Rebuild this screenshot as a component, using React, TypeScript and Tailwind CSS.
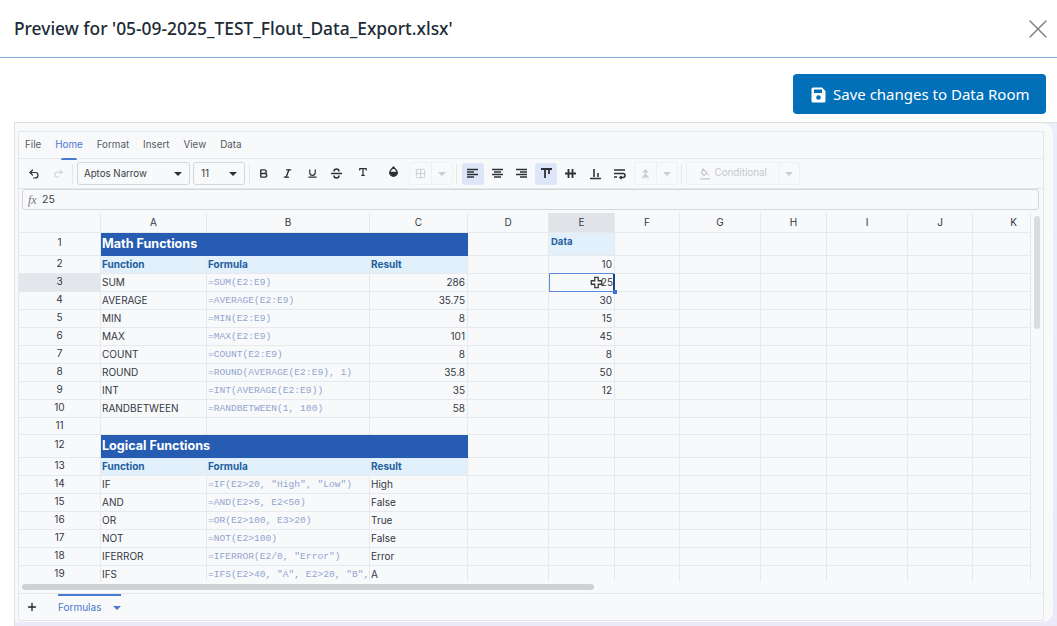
import { X, Undo2, Redo2, Bold, Italic, Underline, Type, Grid2x2, Plus } from "lucide-react";

const colWidths = [82, 106, 163, 98, 81, 66, 65, 81, 66, 81, 65, 58];
const colNames = ["", "A", "B", "C", "D", "E", "F", "G", "H", "I", "J", "K"];

type Kind = "section" | "head" | "fn" | "blank";
type Row = { n: number; h: number; kind: Kind; a?: string; b?: string; c?: string; cRight?: boolean; e?: string };

const rows: Row[] = [
  { n: 1, h: 23, kind: "section", a: "Math Functions", e: "Data" },
  { n: 2, h: 18, kind: "head", a: "Function", b: "Formula", c: "Result", e: "10" },
  { n: 3, h: 18, kind: "fn", a: "SUM", b: "=SUM(E2:E9)", c: "286", cRight: true, e: "25" },
  { n: 4, h: 18, kind: "fn", a: "AVERAGE", b: "=AVERAGE(E2:E9)", c: "35.75", cRight: true, e: "30" },
  { n: 5, h: 18, kind: "fn", a: "MIN", b: "=MIN(E2:E9)", c: "8", cRight: true, e: "15" },
  { n: 6, h: 18, kind: "fn", a: "MAX", b: "=MAX(E2:E9)", c: "101", cRight: true, e: "45" },
  { n: 7, h: 18, kind: "fn", a: "COUNT", b: "=COUNT(E2:E9)", c: "8", cRight: true, e: "8" },
  { n: 8, h: 18, kind: "fn", a: "ROUND", b: "=ROUND(AVERAGE(E2:E9), 1)", c: "35.8", cRight: true, e: "50" },
  { n: 9, h: 18, kind: "fn", a: "INT", b: "=INT(AVERAGE(E2:E9))", c: "35", cRight: true, e: "12" },
  { n: 10, h: 18, kind: "fn", a: "RANDBETWEEN", b: "=RANDBETWEEN(1, 100)", c: "58", cRight: true },
  { n: 11, h: 17, kind: "blank" },
  { n: 12, h: 23, kind: "section", a: "Logical Functions" },
  { n: 13, h: 18, kind: "head", a: "Function", b: "Formula", c: "Result" },
  { n: 14, h: 18, kind: "fn", a: "IF", b: '=IF(E2>20, "High", "Low")', c: "High" },
  { n: 15, h: 18, kind: "fn", a: "AND", b: "=AND(E2>5, E2<50)", c: "False" },
  { n: 16, h: 18, kind: "fn", a: "OR", b: "=OR(E2>100, E3>20)", c: "True" },
  { n: 17, h: 18, kind: "fn", a: "NOT", b: "=NOT(E2>100)", c: "False" },
  { n: 18, h: 18, kind: "fn", a: "IFERROR", b: '=IFERROR(E2/0, "Error")', c: "Error" },
  { n: 19, h: 18, kind: "fn", a: "IFS", b: '=IFS(E2>40, "A", E2>20, "B", "C")', c: "A" },
];

const line = "border-r border-b border-[#e7e9ec]";

function Cell({ w, className = "", children }: { w: number; className?: string; children?: React.ReactNode }) {
  return (
    <div style={{ width: w }} className={`shrink-0 h-full flex items-center overflow-hidden whitespace-nowrap ${line} ${className}`}>
      {children}
    </div>
  );
}

function SheetRow({ row }: { row: Row }) {
  const isActive = row.n === 3;
  return (
    <div style={{ height: row.h }} className="flex text-[10px] text-[#33383f]">
      <Cell w={colWidths[0]} className={`justify-center ${row.kind === "section" ? "pb-[4px]" : "pb-[2px]"} ${isActive ? "bg-[#e3e7ec]" : ""}`}>
        {row.n}
      </Cell>
      {row.kind === "section" ? (
        <div style={{ width: 367 }} className="shrink-0 h-full flex items-center pl-[1px] bg-[#265cb1] text-white text-[12.6px] font-bold">
          {row.a}
        </div>
      ) : row.kind === "head" ? (
        <>
          <Cell w={colWidths[1]} className="pl-[1px] bg-[#e1f0fa] text-[#235f9f] font-bold">{row.a}</Cell>
          <Cell w={colWidths[2]} className="pl-[1px] bg-[#e1f0fa] text-[#235f9f] font-bold">{row.b}</Cell>
          <Cell w={colWidths[3]} className="pl-[1px] bg-[#e1f0fa] text-[#235f9f] font-bold">{row.c}</Cell>
        </>
      ) : (
        <>
          <Cell w={colWidths[1]} className="pl-[1px]">{row.a}</Cell>
          <Cell w={colWidths[2]} className="pl-[1px] pt-[1px] font-['Liberation_Mono',monospace] text-[9.6px] text-[#93a5cf]">{row.b}</Cell>
          <Cell w={colWidths[3]} className={row.cRight ? "justify-end pr-[2px]" : "pl-[1px]"}>{row.c}</Cell>
        </>
      )}
      <Cell w={colWidths[4]} />
      {row.n === 1 ? (
        <Cell w={colWidths[5]} className="pl-[2px] pb-[4px] bg-[#e1f0fa] text-[#235f9f] font-bold text-[9.5px]">{row.e}</Cell>
      ) : isActive ? (
        <Cell w={colWidths[5]} className="relative overflow-visible! justify-end pr-[1px]">
          {row.e}
          <div className="absolute left-0 -top-px right-0 h-px bg-[#5b8ae0]" />
          <div className="absolute left-0 -bottom-px right-0 h-px bg-[#5b8ae0]" />
          <div className="absolute left-0 -top-px -bottom-px w-px bg-[#5b8ae0]" />
          <div className="absolute right-[-1px] top-0 bottom-0 w-[2px] bg-[#1e3f8a]" />
          <div className="absolute right-[-3px] bottom-[-3px] w-[4px] h-[4px] bg-[#3f70d6]" />
          <svg width="13" height="13" viewBox="0 0 15 15" className="absolute right-[11px] top-[2px]">
            <path d="M5.500 1.500h4v4h4v4h-4v4h-4v-4h-4v-4h4z" fill="#ffffff" stroke="#3a3a3a" strokeWidth="1.500" />
          </svg>
        </Cell>
      ) : (
        <Cell w={colWidths[5]} className="justify-end pr-[2px]">{row.e}</Cell>
      )}
      {colWidths.slice(6).map((w, i) => (
        <Cell key={i} w={w} />
      ))}
    </div>
  );
}

function ToolIcon({ children, active, className = "" }: { children: React.ReactNode; active?: boolean; className?: string }) {
  return (
    <div className={`w-[22px] h-[22px] shrink-0 flex items-center justify-center rounded-[3px] text-[#2d3136] ${active ? "bg-[#dde6f8] text-[#2c4a86]" : ""} ${className}`}>
      {children}
    </div>
  );
}

function AlignLines({ d }: { d: string }) {
  return (
    <svg width="13" height="13" viewBox="0 0 13 13" fill="none" stroke="currentColor" strokeWidth="1.300">
      <path d={d} />
    </svg>
  );
}

function Caret({ className = "" }: { className?: string }) {
  return <div className={`w-0 h-0 border-x-[4px] border-x-transparent border-t-[4px] ${className}`} />;
}

function Divider() {
  return <div className="w-px h-[20px] bg-[#e4e6ea] shrink-0" />;
}

function Toolbar() {
  return (
    <div className="h-[30px] shrink-0 flex items-center border-b border-[#e4e6ea] text-[10px] text-[#3a3f45]">
      <ToolIcon className="ml-[4px]"><Undo2 size={12} strokeWidth={2.4} /></ToolIcon>
      <ToolIcon className="ml-[2px] text-[#c4c7cb]!"><Redo2 size={11} /></ToolIcon>
      <div className="ml-[3px]"><Divider /></div>
      <div className="ml-[4px] w-[113px] h-[23px] flex items-center justify-between pt-[1px] px-[6px] border border-[#d4d6da] rounded-[3px] text-[9.7px]">
        Aptos Narrow
        <Caret className="border-t-[#2d3136] mr-[1px]" />
      </div>
      <div className="ml-[3px] w-[52px] h-[23px] flex items-center justify-between px-[7px] border border-[#d4d6da] rounded-[3px]">
        11
        <Caret className="border-t-[#2d3136]" />
      </div>
      <div className="ml-[4px]"><Divider /></div>
      <div className="ml-[2px] flex items-center gap-[2.5px]">
        <ToolIcon><Bold size={11} strokeWidth={3} /></ToolIcon>
        <ToolIcon><Italic size={11} strokeWidth={3} /></ToolIcon>
        <ToolIcon><Underline size={11} strokeWidth={2.6} /></ToolIcon>
        <ToolIcon>
          <svg width="13" height="13" viewBox="0 0 13 13" fill="none" stroke="currentColor" strokeWidth="1.500">
            <path d="M4 4.500a2.500 2.500 0 0 1 5 0M1 6.500h11M4 8.500a2.500 2.500 0 0 0 5 0" />
          </svg>
        </ToolIcon>
        <ToolIcon className="ml-[2px] pb-[3px]"><Type size={10} strokeWidth={3} /></ToolIcon>
        <ToolIcon className="ml-[6px] pb-[3px]">
          <svg width="11" height="12" viewBox="0 0 11 12" fill="none" stroke="currentColor" strokeWidth="1.300">
            <path d="M5.500 1 2.200 4.800a3.600 3.600 0 1 0 6.600 0z" />
            <path d="M1.800 6.500h7.400a3.700 3.700 0 0 1-7.400 0z" fill="currentColor" />
          </svg>
        </ToolIcon>
      </div>
      <div className="ml-[4px] w-[44px] h-[23px] flex border border-[#eff0f2] rounded-[3px]">
        <div className="w-[22px] flex items-center justify-center border-r border-[#eff0f2] text-[#c9ccd0]"><Grid2x2 size={11} /></div>
        <div className="flex-1 flex items-center justify-center"><Caret className="border-t-[#c9ccd0] border-x-[3px] border-t-[3px]" /></div>
      </div>
      <div className="ml-[3px]"><Divider /></div>
      <div className="ml-[5px] flex items-center gap-[2.5px]">
        <ToolIcon active><AlignLines d="M1 2.500h11M1 5h7M1 7.500h11M1 10h7" /></ToolIcon>
        <ToolIcon><AlignLines d="M1 2.500h11M3 5h7M1 7.500h11M3 10h7" /></ToolIcon>
        <ToolIcon><AlignLines d="M1 2.500h11M5 5h7M1 7.500h11M5 10h7" /></ToolIcon>
        <ToolIcon active>
          <svg width="13" height="13" viewBox="0 0 13 13" fill="none" stroke="currentColor" strokeWidth="1.800">
            <path d="M1 2h11M5 2v9M9 2v5" />
          </svg>
        </ToolIcon>
        <ToolIcon>
          <svg width="13" height="13" viewBox="0 0 13 13" fill="none" stroke="currentColor" strokeWidth="1.800">
            <path d="M1 6.500h11M4.500 2v9M8.500 2v9" />
          </svg>
        </ToolIcon>
        <ToolIcon>
          <svg width="13" height="13" viewBox="0 0 13 13" fill="none" stroke="currentColor" strokeWidth="1.600">
            <path d="M1 11.500h11M5 2v8M9 6v4" />
          </svg>
        </ToolIcon>
        <ToolIcon>
          <svg width="13" height="13" viewBox="0 0 13 13" fill="none" stroke="currentColor" strokeWidth="1.500">
            <path d="M1 3h11M1 6.500h9a2 2 0 0 1 0 4H7M8.500 9l-1.500 1.500 1.500 1.500M1 10h3" />
          </svg>
        </ToolIcon>
      </div>
      <div className="ml-[3px] w-[44px] h-[23px] flex border border-[#eff0f2] rounded-[3px]">
        <div className="w-[22px] flex items-center justify-center border-r border-[#eff0f2] text-[#c9ccd0]">
          <svg width="11" height="11" viewBox="0 0 11 11" fill="none" stroke="currentColor" strokeWidth="1.300">
            <path d="M5.500 10V3M3 4.500 5.500 2 8 4.500M2.500 10l3-4 3 4" />
          </svg>
        </div>
        <div className="flex-1 flex items-center justify-center"><Caret className="border-t-[#c9ccd0] border-x-[3px] border-t-[3px]" /></div>
      </div>
      <div className="ml-[3px]"><Divider /></div>
      <div className="ml-[4px] w-[114px] h-[23px] flex border border-[#eff0f2] rounded-[3px] text-[#c4c7cb] text-[9.8px]">
        <div className="w-[93px] flex items-center gap-[4px] pl-[12px] border-r border-[#eff0f2]">
          <svg width="12" height="12" viewBox="0 0 12 12" fill="none" stroke="currentColor" strokeWidth="1.200">
            <path d="M4 1l4 4-3 2.500L2.500 5zM9.500 6v1.500M1 10.800h10" />
          </svg>
          <span>Conditional</span>
        </div>
        <div className="flex-1 flex items-center justify-center"><Caret className="border-t-[#c9ccd0] border-x-[3px] border-t-[3px]" /></div>
      </div>
    </div>
  );
}

export default function App() {
  return (
    <div className="w-[1057px] h-[626px] overflow-hidden bg-white font-['Inter',sans-serif]">
      <header className="h-[58px] flex items-center justify-between pl-[14px] pr-[3px] border-b border-[#80a9d8]">
        <h1 className="font-['Noto_Sans',sans-serif] font-medium text-[17.4px] text-[#212b36]">
          Preview for '05-09-2025_TEST_Flout_Data_Export.xlsx'
        </h1>
        <X size={32} strokeWidth={1} className="text-[#7b7f83]" />
      </header>
      <div className="h-[64px] flex justify-end pt-[16px] pr-[11px]">
        <button className="w-[253px] h-[40px] flex items-center pl-[18px] gap-[7px] rounded-[4px] bg-[#0170b9] text-white font-['Noto_Sans',sans-serif] text-[15px] pt-[1px]">
          <svg width="15" height="16" viewBox="0 0 15 16" className="shrink-0">
            <path d="M2 .500h9l3.500 3.500v10a1.500 1.500 0 0 1-1.500 1.500H2A1.500 1.500 0 0 1 .500 14V2A1.500 1.500 0 0 1 2 .500z" fill="#ffffff" />
            <rect x="3" y="2.500" width="8" height="3.500" fill="#0170b9" />
            <circle cx="7.500" cy="10.500" r="2.300" fill="#0170b9" />
          </svg>
          Save changes to Data Room
        </button>
      </div>
      <div className="ml-[14px] h-[504px] border-t border-l border-[#dedfe1] bg-linear-to-b from-[#e8eefa] to-[#ece9f8]">
        <div className="w-[1038px] h-[499px] pt-[8px] pl-[3px] bg-[#f8f9fb] rounded-r-[10px]">
          <div className="relative w-[1026px] h-[490px] flex flex-col border border-[#e4e6ea] overflow-hidden">
            <nav className="h-[27px] shrink-0 flex items-center gap-[14px] pl-[6px] border-b border-[#e4e6ea] text-[9.8px] text-[#555a61]">
              <span>File</span>
              <span className="relative text-[#4a78cf]">
                Home
                <span className="absolute left-[6px] right-[6px] top-[20px] h-[2px] rounded-t bg-[#4a78cf]" />
              </span>
              <span>Format</span>
              <span>Insert</span>
              <span>View</span>
              <span>Data</span>
            </nav>
            <Toolbar />
            <div className="shrink-0 w-[1017px] ml-[3px] h-[21px] flex items-center border border-[#d4d6da] rounded-[3px] text-[10.5px] text-[#3a3f45]">
              <span className="ml-[5px] w-[12px] font-['Liberation_Serif',serif] italic text-[12px] text-[#77797d]">fx</span>
              <span className="ml-[2px]">25</span>
            </div>
            <div className="h-[20px] mt-[3px] shrink-0 flex text-[10px] text-[#33383f]">
              {colNames.map((name, i) => (
                <Cell key={i} w={colWidths[i]} className={`justify-center ${name === "E" ? "bg-[#e0e3e7]" : ""} ${name === "K" ? "pl-[24px]" : ""}`}>{name}</Cell>
              ))}
            </div>
            <div className="h-[348px] shrink-0 overflow-hidden">
              {rows.map((row) => (
                <SheetRow key={row.n} row={row} />
              ))}
            </div>
            <div className="h-[13px] shrink-0 pt-[3px] pl-[3px] border-b border-[#e4e6ea]">
              <div className="w-[572px] h-[6px] rounded-full bg-[#cfd0d2]" />
            </div>
            <div className="flex-1 flex text-[10px]">
              <Plus size={12} strokeWidth={2.8} className="ml-[7px] mt-[7px] text-[#26292d]" />
              <div className="relative ml-[20px] w-[63px] pt-[6px] text-[#4a78cf]">
                <div className="absolute left-0 right-0 top-0 h-[2px] bg-[#4a78cf]" />
                Formulas
                <Caret className="absolute right-0 top-[12px] border-t-[#4a78cf] border-x-[3px] border-t-[3px]" />
              </div>
            </div>
            <div className="absolute left-[1015px] top-[84px] w-[6px] h-[113px] rounded-full bg-[#dadbdd]" />
          </div>
        </div>
      </div>
    </div>
  );
}
